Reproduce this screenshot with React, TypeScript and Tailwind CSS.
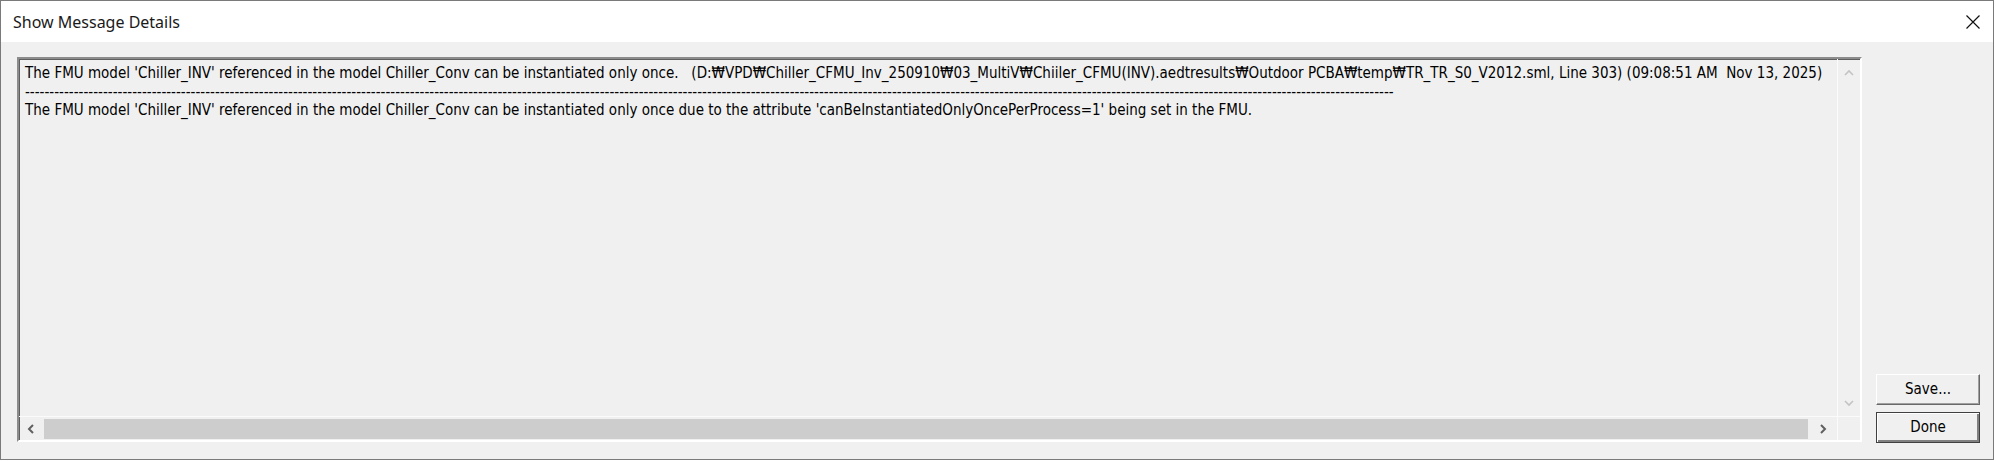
import React from 'react';

const MSG_HEAD =
  "The FMU model 'Chiller_INV' referenced in the model Chiller_Conv can be instantiated only once.   (D:₩VPD₩Chiller_CFMU_Inv_250910₩03_MultiV₩Chiiler_CFMU(INV).aedtresults₩Outdoor PCBA₩temp₩TR_TR_S0_V2012.sml, Line 303) (09:08:51 AM  Nov 13, 2025)";
const MSG_BODY =
  "The FMU model 'Chiller_INV' referenced in the model Chiller_Conv can be instantiated only once due to the attribute 'canBeInstantiatedOnlyOncePerProcess=1' being set in the FMU.";
const DASHES = '-'.repeat(281);

const Chevron: React.FC<{ dir: 'up' | 'down' | 'left' | 'right'; color: string }> = ({ dir, color }) => {
  const pts = {
    up: '1,6 5,2 9,6',
    down: '1,2 5,6 9,2',
    left: '6,1 2,5 6,9',
    right: '2,1 6,5 2,9',
  }[dir];
  const horiz = dir === 'left' || dir === 'right';
  return (
    <svg width={horiz ? 8 : 10} height={horiz ? 10 : 8} viewBox={horiz ? '0 0 8 10' : '0 0 10 8'}>
      <polyline points={pts} fill="none" stroke={color} strokeWidth={horiz ? 2 : 1.6} />
    </svg>
  );
};

export default function App() {
  return (
    <div className="w-[1996px] h-[461px] bg-white">
      <div className="w-[1994px] h-[460px] border border-[#7a7a7a] flex flex-col">
        {/* Title bar */}
        <div className="h-[41px] bg-white flex items-center justify-between pl-[12px] pr-[13px]">
          <span className="font-['Noto_Sans',sans-serif] text-[16px] text-[#1a1a1a]">Show Message Details</span>
          <svg width="14" height="14" viewBox="0 0 14 14">
            <path d="M0.5 0.5 L13.5 13.5 M13.5 0.5 L0.5 13.5" stroke="#111" strokeWidth="1.2" />
          </svg>
        </div>

        {/* Body */}
        <div className="flex-1 bg-[#f0f0f0] flex pl-[16px] pt-[15px] font-['DejaVu_Sans_Condensed','Liberation_Sans','Noto_Sans_CJK_KR',sans-serif]">
          {/* Message list */}
          <div className="w-[1845px] h-[385px] border-2 border-t-[#8c8c8c] border-l-[#8c8c8c] border-r-white border-b-white shadow-[inset_1px_1px_0_#5f5f5f] grid grid-cols-[1fr_23px] grid-rows-[1fr_24px]">
            <div className="overflow-hidden pl-[6px] pt-[5px] text-[15px] leading-[18.5px] text-black whitespace-pre">
              <div>{MSG_HEAD}</div>
              <div>{DASHES}</div>
              <div>{MSG_BODY}</div>
            </div>

            {/* Vertical scrollbar (disabled) */}
            <div className="border-l border-[#fbfbfb] flex flex-col justify-between items-center pt-[10px] pb-[9px]">
              <Chevron dir="up" color="#c3c3c3" />
              <Chevron dir="down" color="#c3c3c3" />
            </div>

            {/* Horizontal scrollbar */}
            <div className="border-t border-[#fbfbfb] flex items-center">
              <div className="w-[24px] flex justify-center">
                <Chevron dir="left" color="#606060" />
              </div>
              <div className="ml-[1px] w-[1764px] h-[20px] bg-[#cdcdcd]" />
              <div className="flex-1 flex justify-center">
                <Chevron dir="right" color="#606060" />
              </div>
            </div>
            <div className="border-t border-l border-[#fbfbfb]" />
          </div>

          {/* Buttons */}
          <div className="ml-[14px] flex flex-col justify-end gap-[7px] pb-[16px] text-[15px] text-black">
            <button className="w-[104px] h-[31px] bg-[#f0f0f0] border border-t-white border-l-white border-r-[#696969] border-b-[#696969] shadow-[inset_-1px_-1px_0_#a0a0a0]">
              Save...
            </button>
            <button className="w-[104px] h-[31px] bg-[#f0f0f0] border border-[#404040] shadow-[inset_1px_1px_0_#ffffff,inset_-2px_-2px_0_#808080]">
              Done
            </button>
          </div>
        </div>
      </div>
    </div>
  );
}
